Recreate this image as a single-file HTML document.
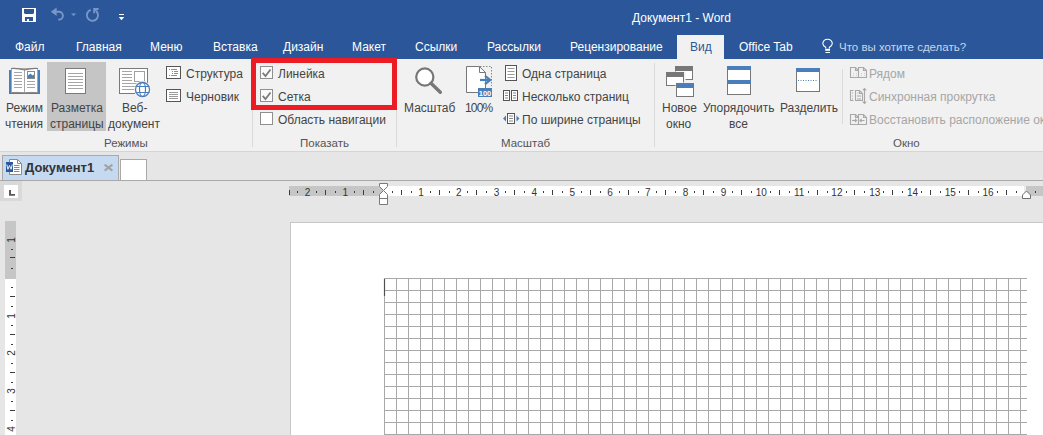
<!DOCTYPE html>
<html><head><meta charset="utf-8">
<style>
*{margin:0;padding:0;box-sizing:border-box}
html,body{width:1043px;height:435px;overflow:hidden;background:#e6e6e6;font-family:"Liberation Sans",sans-serif}
.a{position:absolute}
.t{position:absolute;font-size:12px;line-height:12px;white-space:nowrap;color:#444}
.w{color:#fff}
.rn{position:absolute;width:20px;text-align:center;font-size:10px;line-height:10px;color:#333}
.rv{transform:rotate(-90deg)}
svg{position:absolute;overflow:visible}
</style></head><body>
<!-- title + tabs bar -->
<div class="a" style="left:0;top:0;width:1043px;height:59px;background:#2b579a"></div>
<div class="t w" style="left:632px;top:12px">Документ1 - Word</div>
<!-- QAT -->
<svg style="left:0;top:0" width="130" height="30">
<rect x="22" y="8" width="14" height="14" fill="#fff"/>
<path d="M24 9H34V13L33 14H25L24 13Z" fill="#2b579a"/>
<rect x="25" y="17" width="8" height="4" fill="#2b579a"/>
<rect x="27" y="19" width="2" height="2" fill="#fff"/>
<path d="M50.8 11.8L56.6 7.6V16Z" fill="#7896c6"/>
<path d="M55 11.8H59A3.9 3.9 0 0 1 59 19.6H58.2" stroke="#7896c6" stroke-width="1.9" fill="none"/>
<path d="M71 13.5H76.2L73.6 16Z" fill="#7896c6"/>
<path d="M90.8 9.9A5.6 5.6 0 1 0 96.6 11.5" stroke="#7896c6" stroke-width="1.9" fill="none"/>
<path d="M94.2 13.2V9H98.6" stroke="#7896c6" stroke-width="1.9" fill="none"/>
<path d="M94.5 9.3L97.5 12.3" stroke="#7896c6" stroke-width="1.6"/>
<rect x="119" y="14" width="5" height="1" fill="#fff"/>
<path d="M118.8 17H124.2L121.5 20.2Z" fill="#fff"/>
</svg>
<!-- lightbulb -->
<svg style="left:0;top:0" width="1043" height="60">
<path d="M825.7 48.6V47.3C823.7 46 822.8 44.9 822.8 43.4A4.8 4.8 0 0 1 832.3 43.4C832.3 44.9 831.4 46 829.4 47.3V48.6" stroke="#fff" stroke-width="1.1" fill="none"/>
<rect x="825.2" y="48.8" width="4.8" height="2" fill="#fff"/>
<rect x="825.5" y="52" width="4.5" height="1" fill="#fff"/>
</svg>

<div class="t w" style="left:15px;top:41px">Файл</div>
<div class="t w" style="left:76px;top:41px">Главная</div>
<div class="t w" style="left:150px;top:41px">Меню</div>
<div class="t w" style="left:213px;top:41px">Вставка</div>
<div class="t w" style="left:283px;top:41px">Дизайн</div>
<div class="t w" style="left:352px;top:41px">Макет</div>
<div class="t w" style="left:415px;top:41px">Ссылки</div>
<div class="t w" style="left:487px;top:41px">Рассылки</div>
<div class="t w" style="left:570px;top:41px">Рецензирование</div>
<div class="a" style="left:677px;top:35px;width:47px;height:24px;background:#f1f1f1"></div>
<div class="t" style="left:690px;top:41px;color:#2b579a">Вид</div>
<div class="t w" style="left:739px;top:41px">Office Tab</div>
<div class="t" style="left:839px;top:41px;font-size:11.5px;color:#c9d5e8">Что вы хотите сделать?</div>

<!-- ribbon -->
<div class="a" style="left:0;top:59px;width:1043px;height:92px;background:#f1f1f1"></div>
<div class="a" style="left:0;top:151px;width:1043px;height:1px;background:#d5d5d5"></div>
<div class="a" style="left:47px;top:62px;width:59px;height:69px;background:#c5c5c5"></div>
<svg style="left:0;top:0" width="1043" height="152">
<!-- reading mode -->
<path d="M9 70H11V92H38V70H40V94H9Z" fill="#4a7ebb"/>
<path d="M11.5 68.5H24.5V92.5H11.5Z M24.5 68.5H37.5V92.5H24.5Z" fill="#fff" stroke="#a8a8a8" stroke-width="1"/>
<path d="M11 68.5Q18 68 24.5 70Q31 68 38 68.5" fill="none" stroke="#7a7a7a" stroke-width="1.2"/>
<path d="M11.5 92.5Q18 92 24.5 93Q31 92 37.5 92.5" fill="none" stroke="#8a8a8a" stroke-width="1"/>
<path d="M14 72.5H22M14 75.5H22M14 78.5H22M14 81.5H22M14 84.5H22M14 87.5H22M27 81.5H35M27 84.5H35M27 87.5H35" stroke="#a6a6a6" stroke-width="1"/>
<rect x="27.5" y="71.5" width="7" height="7" fill="#fff" stroke="#8a8a8a"/>
<path d="M28 78V75.5L30.5 73.5L32.5 75.5L34 74.5V78Z" fill="#4a7ebb"/>
<!-- print layout -->
<rect x="65.5" y="68.5" width="20" height="25" fill="#fff" stroke="#7a7a7a"/>
<path d="M68 73.5H83M68 76.5H83M68 79.5H83M68 82.5H83M68 85.5H83M68 88.5H83" stroke="#a6a6a6"/>
<!-- web layout -->
<rect x="119.5" y="68.5" width="28" height="25" fill="#fff" stroke="#7a7a7a"/>
<path d="M122 71.5H132M122 74.5H132M122 77.5H132M122 80.5H132M122 83.5H137M122 86.5H136M122 89.5H136" stroke="#a6a6a6"/>
<rect x="134.5" y="71.5" width="10" height="10" fill="#fff" stroke="#a0a0a0"/>
<circle cx="142.5" cy="89.5" r="8.5" fill="#f1f1f1"/>
<circle cx="142.5" cy="89.5" r="7" fill="#fff" stroke="#4a7ebb" stroke-width="1.3"/>
<ellipse cx="142.5" cy="89.5" rx="3" ry="7" fill="none" stroke="#4a7ebb" stroke-width="1.2"/>
<path d="M135.5 86.5H149.5M135.5 92.5H149.5" stroke="#4a7ebb" stroke-width="1.2"/>
<!-- outline -->
<rect x="166.5" y="66.5" width="14" height="12" fill="#fff" stroke="#555"/>
<path d="M169 69.5H170M171 69.5H177M172 71.5H173M174 71.5H178M172 73.5H173M174 73.5H178M169 75.5H170M171 75.5H177" stroke="#8f8f8f"/>
<!-- draft -->
<rect x="166.5" y="89.5" width="14" height="12" fill="#fff" stroke="#555"/>
<path d="M169 92.5H178M169 94.5H178M169 96.5H178M169 98.5H178" stroke="#9a9a9a"/>
<!-- checkboxes -->
<rect x="260.5" y="66.5" width="12" height="12" fill="#fafafa" stroke="#8f8f8f"/>
<path d="M262.7 72.8L265.5 76L270.5 69.5" stroke="#7a7a7a" stroke-width="1.8" fill="none"/>
<rect x="260.5" y="89.5" width="12" height="12" fill="#fafafa" stroke="#8f8f8f"/>
<path d="M262.7 95.8L265.5 99L270.5 92.5" stroke="#7a7a7a" stroke-width="1.8" fill="none"/>
<rect x="260.5" y="112.5" width="12" height="12" fill="#fff" stroke="#8f8f8f"/>
<!-- zoom magnifier -->
<circle cx="424.8" cy="77" r="8.6" fill="#fff" stroke="#777" stroke-width="2.2"/>
<path d="M431 83.3L440.3 92.3" stroke="#777" stroke-width="3.4" stroke-linecap="round"/>
<!-- 100% -->
<path d="M466.5 66.5H479.5L485.5 72.5V92.5H466.5Z" fill="#fff" stroke="#777"/>
<path d="M479.5 66.5V72.5H485.5" fill="none" stroke="#777"/>
<path d="M480 66.5H491.5V86" fill="none" stroke="#888" stroke-dasharray="1.5 1.5"/>
<path d="M480 80H489" stroke="#4a7ebb" stroke-width="2.2"/>
<path d="M485 75.8L490.2 80L485 84.2" stroke="#4a7ebb" stroke-width="2.2" fill="none"/>
<rect x="478" y="88" width="14" height="9" fill="#4a7ebb"/>
<text x="485" y="95.6" font-family="Liberation Sans" font-size="7.5" font-weight="bold" fill="#fff" text-anchor="middle">100</text>
<!-- one page -->
<rect x="505.5" y="65.5" width="11" height="15" fill="#fff" stroke="#555"/>
<path d="M507.5 68.5H514.5M507.5 71.5H514.5M507.5 74.5H514.5M507.5 77.5H514.5" stroke="#999"/>
<!-- multiple -->
<rect x="503.5" y="90.5" width="6" height="10" fill="#fff" stroke="#555"/>
<rect x="511.5" y="90.5" width="6" height="10" fill="#fff" stroke="#555"/>
<path d="M505 93H508M505 95.5H508M505 98H508M513 93H516M513 95.5H516M513 98H516" stroke="#888"/>
<!-- page width -->
<rect x="507.5" y="113.5" width="7" height="10" fill="#fff" stroke="#555"/>
<path d="M509 116H513M509 118.5H513M509 121H513" stroke="#888"/>
<path d="M503 118.5L506 115.5V121.5Z M519.5 118.5L516.5 115.5V121.5Z" fill="#4a7ebb"/>
<!-- new window -->
<g transform="translate(1,1)">
<rect x="674.5" y="65.5" width="17" height="13" fill="#fff" stroke="#777"/>
<rect x="675" y="66" width="16" height="4" fill="#777"/>
<rect x="664.5" y="70.5" width="20" height="16" fill="#f1f1f1"/>
<rect x="665.5" y="71.5" width="17" height="13" fill="#fff" stroke="#777"/>
<rect x="666" y="72" width="16" height="4" fill="#777"/>
<rect x="674.5" y="81.5" width="20" height="16" fill="#f1f1f1"/>
<rect x="675.5" y="82.5" width="17" height="13" fill="#fff" stroke="#777"/>
<rect x="676" y="83" width="16" height="4" fill="#4a7ebb"/>
</g>
<!-- arrange all -->
<rect x="727.5" y="66.5" width="23" height="28" fill="#fff" stroke="#777"/>
<rect x="727" y="66" width="24" height="4" fill="#4a7ebb"/>
<rect x="727" y="80" width="24" height="4" fill="#4a7ebb"/>
<!-- split -->
<rect x="796.5" y="68.5" width="23" height="23" fill="#fff" stroke="#777"/>
<rect x="796" y="68" width="24" height="4" fill="#4a7ebb"/>
<path d="M798 80.5H818" stroke="#4a7ebb" stroke-dasharray="1 1.5"/>
<!-- disabled small icons -->
<g stroke="#a8a8a8" fill="none" stroke-width="1.1">
<path d="M850.5 67.5H855.5L858.5 70.5V77.5H850.5Z M858.5 67.5H863.5L866.5 70.5V77.5H858.5Z M855.5 67.5V70.5H858.5 M863.5 67.5V70.5H866.5"/>
<path d="M853 73.5H854M856 73.5H857M853 75.5H854M856 75.5H857M861 73.5H862M864 73.5H865M861 75.5H862M864 75.5H865" stroke="#cfcfcf"/>
<path d="M853.5 90.5H850.5V100.5H853.5 M855.5 90.5H859.5L862.5 93.5V100.5H855.5Z M859.5 90.5V93.5H862.5"/>
<path d="M852 93H853M852 96H853M852 99H853M857.5 93H858.5M857 96H861M857 99H861"/>
<path d="M864.5 88.5V103.5M862.8 90.3L864.5 88.6L866.2 90.3M862.8 101.7L864.5 103.4L866.2 101.7"/>
<path d="M850.5 114.5H855.5L858.5 117.5V124.5H850.5Z M858.5 114.5H863.5L866.5 117.5V124.5H858.5Z M855.5 114.5V117.5H858.5 M863.5 114.5V117.5H866.5"/>
<path d="M852 120.5H856.5M855 119L856.5 120.5L855 122 M864.5 120.5H860M861.5 119L860 120.5L861.5 122" stroke-width="1.2"/>
</g>
</svg>


<!-- Режимы -->
<div class="t" style="left:6px;top:102px">Режим</div>
<div class="t" style="left:5px;top:118px">чтения</div>
<div class="t" style="left:51px;top:102px">Разметка</div>
<div class="t" style="left:50px;top:118px">страницы</div>
<div class="t" style="left:122px;top:102px">Веб-</div>
<div class="t" style="left:108px;top:118px">документ</div>
<div class="t" style="left:186px;top:68px">Структура</div>
<div class="t" style="left:186px;top:91px">Черновик</div>
<div class="t" style="left:104px;top:137px;font-size:11.5px;color:#555">Режимы</div>
<div class="a" style="left:252px;top:63px;width:1px;height:84px;background:#dadada"></div>

<!-- Показать -->
<div class="t" style="left:278px;top:68px">Линейка</div>
<div class="t" style="left:278px;top:91px">Сетка</div>
<div class="t" style="left:278px;top:114px">Область навигации</div>
<div class="t" style="left:300px;top:137px;font-size:11.5px;color:#555">Показать</div>
<div class="a" style="left:396px;top:63px;width:1px;height:84px;background:#dadada"></div>

<!-- Масштаб -->
<div class="t" style="left:404px;top:102px">Масштаб</div>
<div class="t" style="left:465px;top:102px;letter-spacing:-0.8px">100%</div>
<div class="t" style="left:522px;top:68px">Одна страница</div>
<div class="t" style="left:522px;top:91px">Несколько страниц</div>
<div class="t" style="left:522px;top:114px">По ширине страницы</div>
<div class="t" style="left:501px;top:137px;font-size:11.5px;color:#555">Масштаб</div>
<div class="a" style="left:654px;top:63px;width:1px;height:84px;background:#dadada"></div>

<!-- Окно -->
<div class="t" style="left:662px;top:102px">Новое</div>
<div class="t" style="left:666px;top:118px">окно</div>
<div class="t" style="left:703px;top:102px">Упорядочить</div>
<div class="t" style="left:729px;top:118px">все</div>
<div class="t" style="left:780px;top:102px">Разделить</div>
<div class="a" style="left:842px;top:69px;width:1px;height:55px;background:#dadada"></div>
<div class="t" style="left:869px;top:68px;color:#a6a6a6">Рядом</div>
<div class="t" style="left:869px;top:91px;color:#a6a6a6">Синхронная прокрутка</div>
<div class="t" style="left:869px;top:114px;color:#a6a6a6">Восстановить расположение окон</div>
<div class="t" style="left:893px;top:137px;font-size:11.5px;color:#555">Окно</div>

<!-- red box -->
<div class="a" style="left:251px;top:58px;width:146px;height:52px;border:5px solid #ed1c24"></div>

<!-- office tab bar -->
<div class="a" style="left:2px;top:155px;width:117px;height:26px;background:#c5d9f1;border:1px solid #a9a9a9;border-bottom:none"></div>
<div class="t" style="left:25px;top:161px;font-size:13px;line-height:13px;font-weight:bold;color:#333">Документ1</div>
<div class="a" style="left:120px;top:159px;width:27px;height:22px;background:#fff;border:1px solid #a9a9a9;border-bottom:none"></div>
<div class="a" style="left:0;top:180px;width:1043px;height:1px;background:#a9a9a9"></div>
<svg style="left:0;top:0" width="200" height="210">
<path d="M9.5 159.5H17.5L21.5 163.5V174.5H9.5Z" fill="#fff" stroke="#8a8a8a"/>
<path d="M17.5 159.5V163.5H21.5" fill="none" stroke="#8a8a8a"/>
<path d="M14 165.5H19.5M14 167.5H19.5M14 169.5H19.5M14 171.5H19.5" stroke="#8a8a8a"/>
<rect x="6" y="162" width="7" height="10" fill="#2b579a"/>
<path d="M6.8 164.5L7.9 169.3L9.5 165.5L11.1 169.3L12.2 164.5" stroke="#fff" stroke-width="0.9" fill="none"/>
<path d="M104.6 164.6L112.4 170.6M112.4 164.6L104.6 170.6" stroke="#a3a3a3" stroke-width="2"/>
<!-- ruler corner -->
<rect x="0" y="181" width="22" height="20" fill="#d9d9d9"/>
<rect x="4" y="185" width="14" height="13" fill="#fff"/>
<path d="M9 190H11V194H15V195.8H9Z" fill="#5a5a5a"/>
</svg>
<!-- horizontal ruler -->
<div class="a" style="left:289px;top:186px;width:754px;height:10px;background:#fff"></div>
<div class="a" style="left:289px;top:186px;width:94px;height:10px;background:#c6c6c6"></div>
<div class="a" style="left:1024px;top:186px;width:2px;height:10px;background:#ebebeb"></div><div class="a" style="left:1026px;top:186px;width:17px;height:10px;background:#c6c6c6"></div>
<div class="a" style="left:289px;top:190px;width:1px;height:5px;background:#3c3c3c"></div>
<div class="a" style="left:297px;top:191px;width:1px;height:2px;background:#3c3c3c"></div>
<div class="rn" style="left:297.6px;top:187.5px">2</div>
<div class="a" style="left:316px;top:191px;width:1px;height:2px;background:#3c3c3c"></div>
<div class="a" style="left:325px;top:190px;width:1px;height:5px;background:#3c3c3c"></div>
<div class="a" style="left:335px;top:191px;width:1px;height:2px;background:#3c3c3c"></div>
<div class="rn" style="left:335.4px;top:187.5px">1</div>
<div class="a" style="left:354px;top:191px;width:1px;height:2px;background:#3c3c3c"></div>
<div class="a" style="left:363px;top:190px;width:1px;height:5px;background:#3c3c3c"></div>
<div class="a" style="left:373px;top:191px;width:1px;height:2px;background:#3c3c3c"></div>
<div class="a" style="left:392px;top:191px;width:1px;height:2px;background:#3c3c3c"></div>
<div class="a" style="left:401px;top:190px;width:1px;height:5px;background:#3c3c3c"></div>
<div class="a" style="left:411px;top:191px;width:1px;height:2px;background:#3c3c3c"></div>
<div class="rn" style="left:411.0px;top:187.5px">1</div>
<div class="a" style="left:430px;top:191px;width:1px;height:2px;background:#3c3c3c"></div>
<div class="a" style="left:439px;top:190px;width:1px;height:5px;background:#3c3c3c"></div>
<div class="a" style="left:449px;top:191px;width:1px;height:2px;background:#3c3c3c"></div>
<div class="rn" style="left:448.8px;top:187.5px">2</div>
<div class="a" style="left:467px;top:191px;width:1px;height:2px;background:#3c3c3c"></div>
<div class="a" style="left:476px;top:190px;width:1px;height:5px;background:#3c3c3c"></div>
<div class="a" style="left:486px;top:191px;width:1px;height:2px;background:#3c3c3c"></div>
<div class="rn" style="left:486.6px;top:187.5px">3</div>
<div class="a" style="left:505px;top:191px;width:1px;height:2px;background:#3c3c3c"></div>
<div class="a" style="left:514px;top:190px;width:1px;height:5px;background:#3c3c3c"></div>
<div class="a" style="left:524px;top:191px;width:1px;height:2px;background:#3c3c3c"></div>
<div class="rn" style="left:524.4px;top:187.5px">4</div>
<div class="a" style="left:543px;top:191px;width:1px;height:2px;background:#3c3c3c"></div>
<div class="a" style="left:552px;top:190px;width:1px;height:5px;background:#3c3c3c"></div>
<div class="a" style="left:562px;top:191px;width:1px;height:2px;background:#3c3c3c"></div>
<div class="rn" style="left:562.2px;top:187.5px">5</div>
<div class="a" style="left:581px;top:191px;width:1px;height:2px;background:#3c3c3c"></div>
<div class="a" style="left:590px;top:190px;width:1px;height:5px;background:#3c3c3c"></div>
<div class="a" style="left:600px;top:191px;width:1px;height:2px;background:#3c3c3c"></div>
<div class="rn" style="left:600.0px;top:187.5px">6</div>
<div class="a" style="left:619px;top:191px;width:1px;height:2px;background:#3c3c3c"></div>
<div class="a" style="left:628px;top:190px;width:1px;height:5px;background:#3c3c3c"></div>
<div class="a" style="left:638px;top:191px;width:1px;height:2px;background:#3c3c3c"></div>
<div class="rn" style="left:637.8px;top:187.5px">7</div>
<div class="a" style="left:656px;top:191px;width:1px;height:2px;background:#3c3c3c"></div>
<div class="a" style="left:665px;top:190px;width:1px;height:5px;background:#3c3c3c"></div>
<div class="a" style="left:675px;top:191px;width:1px;height:2px;background:#3c3c3c"></div>
<div class="rn" style="left:675.6px;top:187.5px">8</div>
<div class="a" style="left:694px;top:191px;width:1px;height:2px;background:#3c3c3c"></div>
<div class="a" style="left:703px;top:190px;width:1px;height:5px;background:#3c3c3c"></div>
<div class="a" style="left:713px;top:191px;width:1px;height:2px;background:#3c3c3c"></div>
<div class="rn" style="left:713.5px;top:187.5px">9</div>
<div class="a" style="left:732px;top:191px;width:1px;height:2px;background:#3c3c3c"></div>
<div class="a" style="left:741px;top:190px;width:1px;height:5px;background:#3c3c3c"></div>
<div class="a" style="left:751px;top:191px;width:1px;height:2px;background:#3c3c3c"></div>
<div class="rn" style="left:751.3px;top:187.5px">10</div>
<div class="a" style="left:770px;top:191px;width:1px;height:2px;background:#3c3c3c"></div>
<div class="a" style="left:779px;top:190px;width:1px;height:5px;background:#3c3c3c"></div>
<div class="a" style="left:789px;top:191px;width:1px;height:2px;background:#3c3c3c"></div>
<div class="rn" style="left:789.1px;top:187.5px">11</div>
<div class="a" style="left:808px;top:191px;width:1px;height:2px;background:#3c3c3c"></div>
<div class="a" style="left:817px;top:190px;width:1px;height:5px;background:#3c3c3c"></div>
<div class="a" style="left:827px;top:191px;width:1px;height:2px;background:#3c3c3c"></div>
<div class="rn" style="left:826.9px;top:187.5px">12</div>
<div class="a" style="left:846px;top:191px;width:1px;height:2px;background:#3c3c3c"></div>
<div class="a" style="left:854px;top:190px;width:1px;height:5px;background:#3c3c3c"></div>
<div class="a" style="left:864px;top:191px;width:1px;height:2px;background:#3c3c3c"></div>
<div class="rn" style="left:864.7px;top:187.5px">13</div>
<div class="a" style="left:883px;top:191px;width:1px;height:2px;background:#3c3c3c"></div>
<div class="a" style="left:892px;top:190px;width:1px;height:5px;background:#3c3c3c"></div>
<div class="a" style="left:902px;top:191px;width:1px;height:2px;background:#3c3c3c"></div>
<div class="rn" style="left:902.5px;top:187.5px">14</div>
<div class="a" style="left:921px;top:191px;width:1px;height:2px;background:#3c3c3c"></div>
<div class="a" style="left:930px;top:190px;width:1px;height:5px;background:#3c3c3c"></div>
<div class="a" style="left:940px;top:191px;width:1px;height:2px;background:#3c3c3c"></div>
<div class="rn" style="left:940.3px;top:187.5px">15</div>
<div class="a" style="left:959px;top:191px;width:1px;height:2px;background:#3c3c3c"></div>
<div class="a" style="left:968px;top:190px;width:1px;height:5px;background:#3c3c3c"></div>
<div class="a" style="left:978px;top:191px;width:1px;height:2px;background:#3c3c3c"></div>
<div class="rn" style="left:978.1px;top:187.5px">16</div>
<div class="a" style="left:997px;top:191px;width:1px;height:2px;background:#3c3c3c"></div>
<div class="a" style="left:1006px;top:190px;width:1px;height:5px;background:#3c3c3c"></div>
<div class="a" style="left:1016px;top:191px;width:1px;height:2px;background:#3c3c3c"></div>
<div class="a" style="left:1035px;top:191px;width:1px;height:2px;background:#3c3c3c"></div>
<svg style="left:0;top:0" width="1043" height="210">
<path d="M379.5 183.5H387.5V186.5L383.5 190.5L379.5 186.5Z" fill="#fff" stroke="#7a7a7a"/>
<path d="M383.5 190.5L387.5 194.5V204.5H379.5V194.5Z M379.5 198.5H387.5" fill="#fff" stroke="#7a7a7a"/>
<path d="M1026.5 191L1030.5 195V198.5H1022.5V195Z" fill="#fff" stroke="#6e6e6e"/>
</svg>

<!-- vertical ruler -->
<div class="a" style="left:5px;top:221px;width:11px;height:214px;background:#fff"></div>
<div class="a" style="left:5px;top:221px;width:11px;height:58px;background:#c6c6c6"></div>
<div class="rn rv" style="left:2px;top:234.9px">1</div>
<div class="a" style="left:11px;top:249px;width:2px;height:1px;background:#3c3c3c"></div>
<div class="a" style="left:10px;top:257px;width:5px;height:1px;background:#3c3c3c"></div>
<div class="a" style="left:11px;top:268px;width:2px;height:1px;background:#3c3c3c"></div>
<div class="a" style="left:11px;top:287px;width:2px;height:1px;background:#3c3c3c"></div>
<div class="a" style="left:10px;top:296px;width:5px;height:1px;background:#3c3c3c"></div>
<div class="a" style="left:11px;top:306px;width:2px;height:1px;background:#3c3c3c"></div>
<div class="rn rv" style="left:2px;top:310.5px">1</div>
<div class="a" style="left:11px;top:325px;width:2px;height:1px;background:#3c3c3c"></div>
<div class="a" style="left:10px;top:334px;width:5px;height:1px;background:#3c3c3c"></div>
<div class="a" style="left:11px;top:344px;width:2px;height:1px;background:#3c3c3c"></div>
<div class="rn rv" style="left:2px;top:348.3px">2</div>
<div class="a" style="left:11px;top:363px;width:2px;height:1px;background:#3c3c3c"></div>
<div class="a" style="left:10px;top:372px;width:5px;height:1px;background:#3c3c3c"></div>
<div class="a" style="left:11px;top:382px;width:2px;height:1px;background:#3c3c3c"></div>
<div class="rn rv" style="left:2px;top:386.1px">3</div>
<div class="a" style="left:11px;top:401px;width:2px;height:1px;background:#3c3c3c"></div>
<div class="a" style="left:10px;top:410px;width:5px;height:1px;background:#3c3c3c"></div>
<div class="a" style="left:11px;top:420px;width:2px;height:1px;background:#3c3c3c"></div>
<div class="rn rv" style="left:2px;top:423.9px">4</div>
<div class="a" style="left:11px;top:439px;width:2px;height:1px;background:#3c3c3c"></div>
<div class="a" style="left:10px;top:448px;width:5px;height:1px;background:#3c3c3c"></div>
<div class="a" style="left:11px;top:457px;width:2px;height:1px;background:#3c3c3c"></div>
<div class="rn rv" style="left:2px;top:461.7px">5</div>
<div class="a" style="left:11px;top:476px;width:2px;height:1px;background:#3c3c3c"></div>
<div class="a" style="left:10px;top:485px;width:5px;height:1px;background:#3c3c3c"></div>
<div class="a" style="left:11px;top:495px;width:2px;height:1px;background:#3c3c3c"></div>
<div class="rn rv" style="left:2px;top:499.5px">6</div>
<div class="a" style="left:11px;top:514px;width:2px;height:1px;background:#3c3c3c"></div>
<div class="a" style="left:10px;top:523px;width:5px;height:1px;background:#3c3c3c"></div>
<div class="a" style="left:11px;top:533px;width:2px;height:1px;background:#3c3c3c"></div>
<div class="rn rv" style="left:2px;top:537.3px">7</div>
<div class="a" style="left:11px;top:552px;width:2px;height:1px;background:#3c3c3c"></div>

<!-- page -->
<div class="a" style="left:290px;top:222px;width:760px;height:220px;background:#fff;border:1px solid #c6c6c6"></div>
<svg style="left:0;top:0" width="1043" height="435"><path d="M384 278.5H1027 M384 290.5H1027 M384 302.5H1027 M384 314.5H1027 M384 326.5H1027 M384 338.5H1027 M384 350.5H1027 M384 362.5H1027 M384 374.5H1027 M384 386.5H1027 M384 398.5H1027 M384 410.5H1027 M384 422.5H1027 M384 434.5H1027 M384.5 278V435 M396.5 278V435 M408.5 278V435 M420.5 278V435 M432.5 278V435 M444.5 278V435 M456.5 278V435 M468.5 278V435 M480.5 278V435 M492.5 278V435 M504.5 278V435 M516.5 278V435 M528.5 278V435 M540.5 278V435 M552.5 278V435 M564.5 278V435 M576.5 278V435 M588.5 278V435 M600.5 278V435 M612.5 278V435 M624.5 278V435 M636.5 278V435 M648.5 278V435 M660.5 278V435 M672.5 278V435 M684.5 278V435 M696.5 278V435 M708.5 278V435 M720.5 278V435 M732.5 278V435 M744.5 278V435 M756.5 278V435 M768.5 278V435 M780.5 278V435 M792.5 278V435 M804.5 278V435 M816.5 278V435 M828.5 278V435 M840.5 278V435 M852.5 278V435 M864.5 278V435 M876.5 278V435 M888.5 278V435 M900.5 278V435 M912.5 278V435 M924.5 278V435 M936.5 278V435 M948.5 278V435 M960.5 278V435 M972.5 278V435 M984.5 278V435 M996.5 278V435 M1008.5 278V435 M1020.5 278V435" stroke="#a8a8a8" stroke-width="1" fill="none"/><path d="M384.5 279V296" stroke="#505050" stroke-width="1.2"/></svg>
</body></html>
